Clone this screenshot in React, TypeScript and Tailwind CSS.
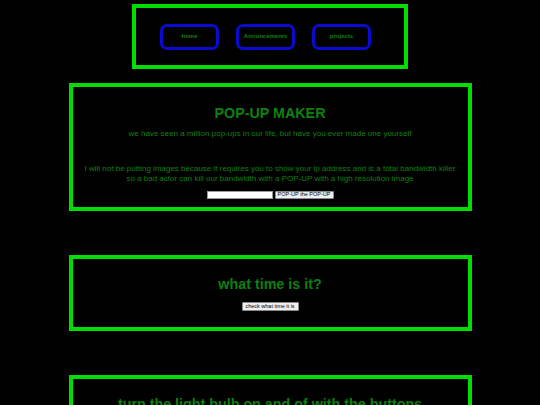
import React from "react";

const green = "text-[#0e800e]";

export default function App() {
  return (
    <div className="min-h-screen bg-black pt-[4px] pb-[40px]" style={{ fontFamily: '"Liberation Sans", Arial, sans-serif' }}>
      <div className="mx-auto flex h-[65px] w-[276px] items-center gap-[17px] border-4 border-[#00dd00] pl-[24px]">
        {["home", "Anouncements", "projects"].map((t) => (
          <div
            key={t}
            className={`flex h-[26px] w-[59px] items-center justify-center whitespace-nowrap rounded-[7px] border-[3px] border-[#0a0ad0] text-[6px] font-bold ${green}`}
          >
            {t}
          </div>
        ))}
      </div>

      <div className="mx-auto mt-[14px] h-[128px] w-[403px] border-4 border-[#00dd00] text-center">
        <div className={`pt-[17px] text-[14.3px] font-bold leading-[18px] ${green}`}>POP-UP MAKER</div>
        <div className={`mt-[7px] text-[8px] leading-[10px] ${green}`}>
          we have seen a million pop-ups in our life, but have you ever made one yourself
        </div>
        <div className={`mt-[25px] text-[8px] leading-[9.5px] ${green}`}>
          I will not be putting images because it requires you to show your ip address and is a total bandwidth killer
          <br />
          so a bad actor can kill our bandwidth with a POP-UP with a high resolution image
        </div>
        <div className="mt-[8px] flex items-center justify-center gap-[2px]">
          <div className="h-[8px] w-[66px] border border-[#999] bg-white" />
          <div className="flex h-[8px] w-[59px] items-center justify-center whitespace-nowrap rounded-[1px] border border-[#888] bg-[#efefef] text-[5.5px] leading-none text-black">
            POP-UP the POP-UP
          </div>
        </div>
      </div>

      <div className="mx-auto mt-[44px] h-[76px] w-[403px] border-4 border-[#00dd00] text-center">
        <div className={`pt-[16px] text-[14.3px] font-bold leading-[18px] ${green}`}>what time is it?</div>
        <div className="mt-[9px] flex justify-center">
          <div className="flex h-[9px] w-[57px] items-center justify-center whitespace-nowrap rounded-[1px] border border-[#888] bg-[#efefef] text-[5.5px] leading-none text-black">
            check what time it is
          </div>
        </div>
      </div>

      <div className="mx-auto mt-[44px] h-[120px] w-[403px] border-4 border-[#00dd00] text-center">
        <div className={`pt-[16px] text-[14.3px] font-bold leading-[18px] ${green}`}>
          turn the light bulb on and of with the buttons
        </div>
      </div>
    </div>
  );
}
